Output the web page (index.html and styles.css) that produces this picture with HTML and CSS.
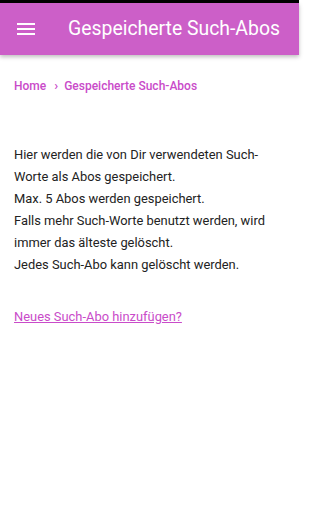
FILE: index.html
```html
<!DOCTYPE html>
<html lang="de">
<head>
<meta charset="utf-8">
<link rel="stylesheet" href="styles.css">
</head>
<body>
<div class="page">
<div class="statusbar"></div>
<header class="appbar">
  <button class="menu" aria-label="Menü">
    <svg width="18" height="14" viewBox="0 0 18 14"><rect x="0" y="1" width="18" height="2" fill="#fff"/><rect x="0" y="6" width="18" height="2" fill="#fff"/><rect x="0" y="11" width="18" height="2" fill="#fff"/></svg>
  </button>
  <h1 class="title">Gespeicherte Such-Abos</h1>
</header>
<main class="content">
  <nav class="crumbs"><a href="#" class="crumb">Home</a><span class="sep">›</span><span class="crumb">Gespeicherte Such-Abos</span></nav>
  <p class="text">Hier werden die von Dir verwendeten Such-Worte als Abos gespeichert.<br>Max. 5 Abos werden gespeichert.<br>Falls mehr Such-Worte benutzt werden, wird immer das älteste gelöscht.<br>Jedes Such-Abo kann gelöscht werden.</p>
  <p class="linkline"><a href="#" class="link">Neues Such-Abo hinzufügen?</a></p>
</main>
</div>
</body>
</html>
```
FILE: styles.css
```css
html, body { margin: 0; padding: 0; background: #fff; }
body { font-family: Roboto, "Liberation Sans", sans-serif; overflow: hidden; }
.page { width: 299px; }
.statusbar { height: 3px; background: #000; }
.appbar { height: 52px; background: #cc5fc8; display: flex; align-items: center; box-shadow: 0 2px 4px rgba(0,0,0,0.25); position: relative; }
.menu { border: 0; background: none; padding: 0; margin: 0 0 0 17px; width: 18px; height: 14px; display: flex; flex: none; }
.title { margin: 0 0 0 33px; font-size: 19.4px; font-weight: 400; color: #fff; line-height: 24px; white-space: nowrap; }
.content { padding: 0 14px; }
.crumbs { margin-top: 22px; font-size: 12px; font-weight: 500; line-height: 18px; display: flex; align-items: center; }
.crumb { color: #c94bc9; text-decoration: none; }
.sep { margin: 0 6px 0 8px; font-size: 13px; color: #c94bc9; }
.text { margin: 49px 0 0; font-size: 12.9px; line-height: 22px; color: #222; }
.linkline { margin: 30px 0 0; font-size: 12.9px; line-height: 22px; }
.link { color: #c94bc9; text-decoration: underline; }
```
